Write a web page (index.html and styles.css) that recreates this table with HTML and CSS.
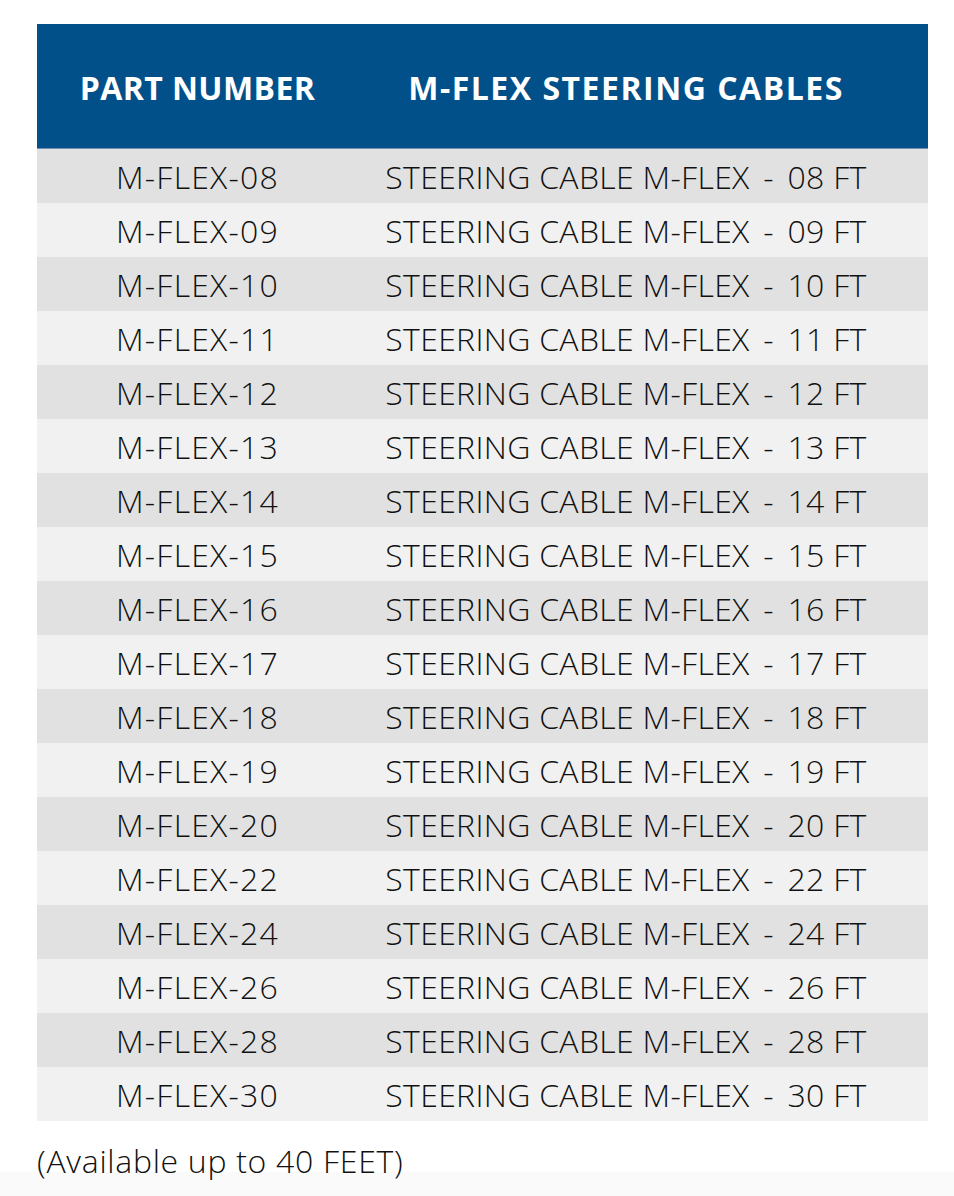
FILE: index.html
```html
<!DOCTYPE html>
<html>
<head>
<meta charset="utf-8">
<link rel="stylesheet" href="styles.css">
</head>
<body>
<div class="page">
  <div class="table">
    <div class="head">
      <div class="c1">PART NUMBER</div>
      <div class="c2">M-FLEX STEERING CABLES</div>
    </div>
    <div class="row"><div class="c1">M-FLEX-08</div><div class="c2">STEERING CABLE M-FLEX<span class="sep"> - </span>08 FT</div></div>
    <div class="row"><div class="c1">M-FLEX-09</div><div class="c2">STEERING CABLE M-FLEX<span class="sep"> - </span>09 FT</div></div>
    <div class="row"><div class="c1">M-FLEX-10</div><div class="c2">STEERING CABLE M-FLEX<span class="sep"> - </span>10 FT</div></div>
    <div class="row"><div class="c1">M-FLEX-11</div><div class="c2">STEERING CABLE M-FLEX<span class="sep"> - </span>11 FT</div></div>
    <div class="row"><div class="c1">M-FLEX-12</div><div class="c2">STEERING CABLE M-FLEX<span class="sep"> - </span>12 FT</div></div>
    <div class="row"><div class="c1">M-FLEX-13</div><div class="c2">STEERING CABLE M-FLEX<span class="sep"> - </span>13 FT</div></div>
    <div class="row"><div class="c1">M-FLEX-14</div><div class="c2">STEERING CABLE M-FLEX<span class="sep"> - </span>14 FT</div></div>
    <div class="row"><div class="c1">M-FLEX-15</div><div class="c2">STEERING CABLE M-FLEX<span class="sep"> - </span>15 FT</div></div>
    <div class="row"><div class="c1">M-FLEX-16</div><div class="c2">STEERING CABLE M-FLEX<span class="sep"> - </span>16 FT</div></div>
    <div class="row"><div class="c1">M-FLEX-17</div><div class="c2">STEERING CABLE M-FLEX<span class="sep"> - </span>17 FT</div></div>
    <div class="row"><div class="c1">M-FLEX-18</div><div class="c2">STEERING CABLE M-FLEX<span class="sep"> - </span>18 FT</div></div>
    <div class="row"><div class="c1">M-FLEX-19</div><div class="c2">STEERING CABLE M-FLEX<span class="sep"> - </span>19 FT</div></div>
    <div class="row"><div class="c1">M-FLEX-20</div><div class="c2">STEERING CABLE M-FLEX<span class="sep"> - </span>20 FT</div></div>
    <div class="row"><div class="c1">M-FLEX-22</div><div class="c2">STEERING CABLE M-FLEX<span class="sep"> - </span>22 FT</div></div>
    <div class="row"><div class="c1">M-FLEX-24</div><div class="c2">STEERING CABLE M-FLEX<span class="sep"> - </span>24 FT</div></div>
    <div class="row"><div class="c1">M-FLEX-26</div><div class="c2">STEERING CABLE M-FLEX<span class="sep"> - </span>26 FT</div></div>
    <div class="row"><div class="c1">M-FLEX-28</div><div class="c2">STEERING CABLE M-FLEX<span class="sep"> - </span>28 FT</div></div>
    <div class="row"><div class="c1">M-FLEX-30</div><div class="c2">STEERING CABLE M-FLEX<span class="sep"> - </span>30 FT</div></div>
  </div>
  <p class="note">(Available up to 40 FEET)</p>
</div>
<div class="band"></div>
</body>
</html>
```
FILE: styles.css
```css
html, body {
  margin: 0;
  padding: 0;
  background: #ffffff;
}
body {
  font-family: "Open Sans", "Noto Sans", sans-serif;
  color: #111111;
}
.page {
  padding: 24px 26px 0 37px;
  height: 1149px;
  box-sizing: border-box;
}
.table {
  width: 891px;
}
.head, .row {
  display: grid;
  grid-template-columns: 321px 1fr;
  align-items: center;
}
.head {
  background: #01508a;
  color: #ffffff;
  height: 125px;
  font-weight: 700;
  font-size: 32px;
  border-bottom: 1px solid #6f8fb0;
  box-sizing: border-box;
}
.head .c1, .head .c2 {
  padding-top: 3px;
}
.head .c1 {
  letter-spacing: 0.4px;
}
.head .c2 {
  letter-spacing: 1.5px;
}
.row {
  height: 54px;
  font-weight: 300;
  font-size: 32px;
  background: #e1e1e1;
}
.row:nth-child(odd) {
  background: #f1f1f1;
}
.row .c1 {
  letter-spacing: 1.2px;
}
.row .c2 {
  letter-spacing: 0.3px;
}
.sep {
  word-spacing: 5px;
}
.c1 {
  text-align: center;
}
.c2 {
  text-align: center;
  padding-right: 34px;
}
.note {
  margin: 0;
  padding-top: 20px;
  font-weight: 300;
  font-size: 32px;
  line-height: 40px;
  letter-spacing: 0.7px;
}
.band {
  height: 24px;
  margin-top: 23px;
  background: #fafafa;
}
```
